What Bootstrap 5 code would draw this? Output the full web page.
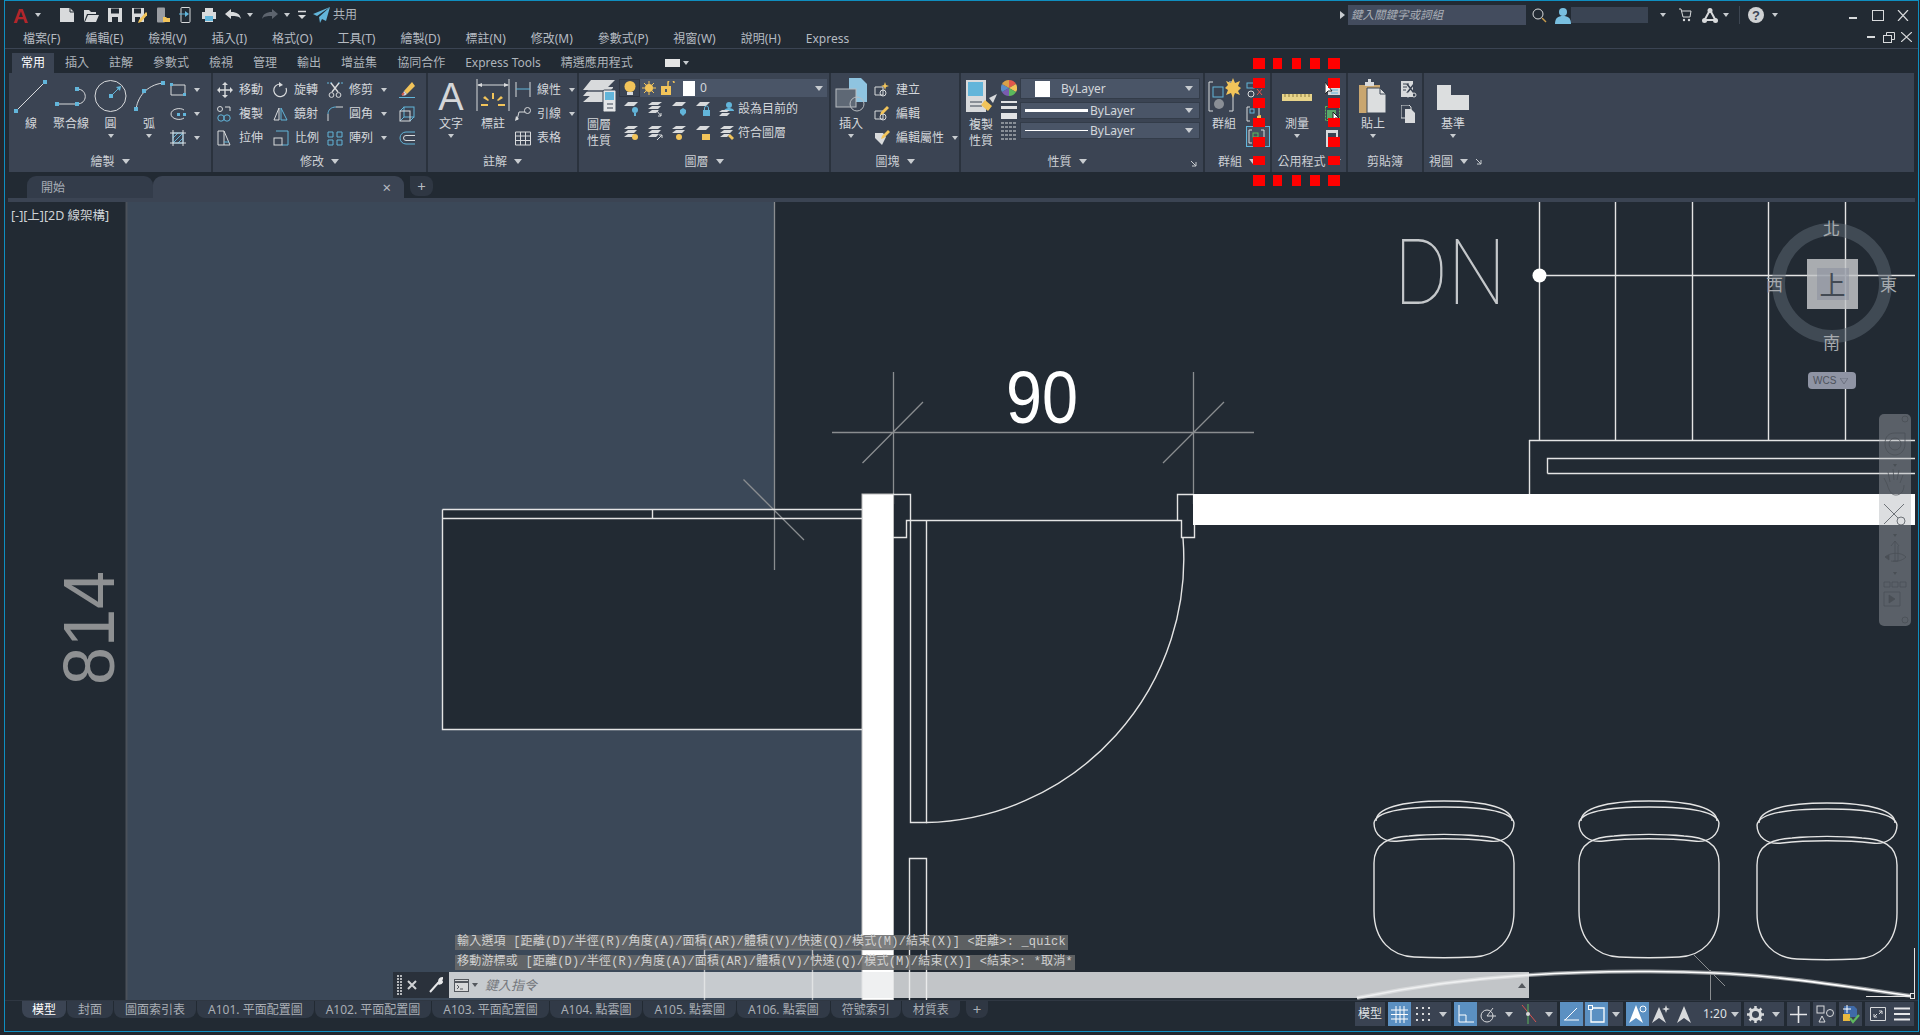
<!DOCTYPE html>
<html lang="zh-Hant">
<head>
<meta charset="UTF-8">
<title>AutoCAD</title>
<link rel="stylesheet" href="https://cdn.jsdelivr.net/npm/bootstrap@5.3.0/dist/css/bootstrap.min.css">
<style>
html, body { height: 100%; overflow: hidden; background: #23272d; }
body { font: 12px/1 "Noto Sans", "Noto Sans CJK TC", sans-serif; color: #c4c8ce; }
.app-frame { width: 1915px; height: 1032px; margin-left: 4px; border: 1px solid #0f8ec0; background: #222a33; display: flex; flex-direction: column; overflow: hidden; }
.dn { display: inline-block; width: 0; height: 0; border-left: 3px solid transparent; border-right: 3px solid transparent; border-top: 4px solid #c8ccd0; flex: none; }
.dn-lg { border-left-width: 4px; border-right-width: 4px; border-top-width: 5px; }
svg { display: block; flex: none; }
.ic { fill: none; stroke: #d8dadc; stroke-width: 1; }
.ic .bl { stroke: #62b5da; }
.ic .fw { fill: #d8dadc; stroke: none; }
.ic .fb { fill: #62b5da; stroke: none; }
.ic .fy { fill: #f2c45a; stroke: none; }
.ml2 { margin-left: 2px; } .ml3 { margin-left: 3px; } .ml5 { margin-left: 5px; } .ml6 { margin-left: 6px; } .ml7 { margin-left: 7px; } .ml8 { margin-left: 8px; }
.ml10 { margin-left: 10px; } .ml12 { margin-left: 12px; } .ml13 { margin-left: 13px; } .ml18 { margin-left: 18px; }

/* title + menu */
.title-bar { height: 28px; padding: 0 9px 0 8px; flex: none; }
.logo-a { font: bold 21px/1 "Liberation Sans", sans-serif; color: #b3262b; width: 16px; }
#share-lb { font-size: 12px; color: #aeb4bb; }
.search-box { width: 178px; height: 20px; background: #434c5e; padding-left: 3px; color: #a9aeb6; font-style: italic; line-height: 20px; font-size: 11.5px; }
.user-box { width: 77px; height: 16px; background: #3a4453; }
.bar-sep { width: 1px; height: 18px; background: #3d4652; }
#win-min { margin: 6px 0 0 71px; } #win-max { margin-left: 15px; } #win-close { margin-left: 13px; }
.menu-bar { height: 20px; padding: 0 6px 0 18px; gap: 25px; border-bottom: 1px solid #3b4453; flex: none; color: #b6bbc2; }
.doc-ctrl { margin-bottom: 3px; }
.doc-ctrl svg:nth-child(3) { margin-left: -2px; }

/* ribbon */
.tab-row { height: 24px; padding: 4px 0 0 7px; flex: none; }
.rb-tab { height: 20px; padding: 0 10px; display: flex; align-items: center; color: #aeb4bb; }
.rb-tab.is-on { background: #3b4453; color: #fff; padding: 0 9px; margin-right: 1px; }
.tab-widget { width: 15px; height: 8px; background: #e4e4e4; margin-left: 22px; margin-right: 3px; }
.ribbon { height: 99px; margin: 0 4px; background: #3b4453; display: flex; flex: none; color: #d4d7db; }
.rb-panel { display: flex; flex-direction: column; border-right: 2px solid #2a323d; flex: none; }
.rb-body { height: 78px; padding-top: 5px; display: flex; }
.rb-foot { flex: 1; display: flex; align-items: center; justify-content: center; gap: 7px; color: #cdd0d5; }
#p-draw { width: 204px; } #p-draw .rb-body { padding-left: 4px; }
#p-mod { width: 215px; } #p-mod .rb-body { padding-left: 4px; }
#p-ann { width: 151px; }
#p-lay { width: 252px; }
#p-blk { width: 130px; }
#p-prop { width: 244px; }
#p-grp { width: 67px; }
#p-util { width: 76px; }
#p-clip { width: 76px; }
#p-view { flex: 1; border-right: 0; }
#p-view .rb-foot { justify-content: flex-start; padding-left: 5px; }
#p-prop .rb-foot { padding-right: 30px; position: relative; }
.big { display: flex; flex-direction: column; align-items: center; text-align: center; flex: none; }
.big > svg { margin-bottom: 4px; overflow: visible; }
.big .t2 { line-height: 16px; margin-top: -1px; }
.big .dn { margin-top: 4px; }
.w36 { width: 36px; } .w38 { width: 38px; } .w40 { width: 40px; } .w42 { width: 42px; } .w44 { width: 44px; } .w46 { width: 46px; } .w35 { width: 35px; } .w50 { width: 50px; } .w58 { width: 58px; }
.rb-col { display: flex; flex-direction: column; flex: none; }
.rb-row { height: 24px; display: flex; align-items: center; }
.rb-row .lb { margin-left: 6px; white-space: nowrap; }
.rb-row .dn { margin-left: 8px; }
.c1 { width: 56px; } .c2 { width: 54px; } .c3 { width: 72px; }
.layer-drop { width: 208px; height: 18px; background: #4a5567; margin-top: 1px; display: flex; align-items: center; color: #d4d7db; }
.bulb-box { width: 21px; height: 18px; background: #3b4453; border: 1px solid #2f3642; display: flex; align-items: center; justify-content: center; margin-right: 2px; }
.layer-sq { width: 12px; height: 15px; background: #fff; margin: 0 5px 0 7px; }
.layer-row { height: 24px; padding-left: 4px; gap: 8px; }
.layer-row .lb-layer { margin-left: -5px; white-space: nowrap; }
.prop-drop { width: 180px; height: 17px; margin-bottom: 3px; background: #4a5567; border: 1px solid #333c49; display: flex; align-items: center; padding: 0 6px 0 4px; color: #d4d7db; }
.prop-drop:first-child { height: 21px; }
.prop-swatch { width: 15px; height: 16px; background: #fff; margin: 0 11px 0 10px; flex: none; }
.prop-line { width: 63px; height: 3px; background: #fff; margin-right: 2px; flex: none; }
.prop-line.thin { height: 1px; }
.prop-ic { gap: 3px; }
.tool-selected { width: 24px; height: 21px; border: 1px solid #62b5da; background: #46505f; }
.arrow-corner { position: absolute; right: 6px; bottom: 5px; }

/* document tabs */
.doc-row { height: 26px; padding: 4px 0 0 22px; flex: none; display: flex; }
.doc-tab { height: 22px; background: #333c4a; border-radius: 9px 9px 0 0; padding: 2px 0 0 14px; display: flex; align-items: center; width: 126px; color: #a7adb5; }
.doc-tab.is-on { background: #3b4453; width: 251px; justify-content: flex-end; padding: 0 13px 0 0; color: #b7bbc1; font-size: 15px; }
.doc-plus { width: 23px; height: 20px; margin-left: 6px; padding-top: 1px; background: #2f3743; border-radius: 0 8px 8px 8px; color: #b7bbc1; display: flex; align-items: center; justify-content: center; font-size: 15px; }
.doc-strip { height: 4px; background: #3b4453; margin-left: 3px; margin-right: 3px; flex: none; }

/* viewport */
.viewport { position: relative; width: 1910px; height: 798px; flex: none; }
.cad-sheet { position: absolute; left: 0; top: 0; }
.vp-label { position: absolute; left: 6px; top: 8px; color: #cfd2d6; font-size: 12.5px; }
.compass { position: absolute; left: 1754px; top: 0; width: 156px; height: 192px; color: #a6aaae; }
.compass .ring { position: absolute; left: 13px; top: 21px; width: 120px; height: 120px; border: 13px solid rgba(90,100,112,.55); border-radius: 50%; }
.cube-face { position: absolute; left: 48px; top: 57px; width: 51px; height: 50px; background: rgba(196,198,200,.84); display: flex; align-items: center; justify-content: center; }
.cube-face span { width: 32px; height: 32px; background: rgba(130,138,155,.45); color: #434a54; font-size: 26px; line-height: 32px; text-align: center; font-family: "Noto Sans CJK TC", serif; }
.dir { position: absolute; font: 17px/18px "Noto Sans CJK TC", sans-serif; }
.dir-n { left: 64px; top: 17px; } .dir-s { left: 64px; top: 131px; } .dir-w { left: 7px; top: 73px; } .dir-e { left: 121px; top: 73px; }
.wcs-tag { position: absolute; left: 49px; top: 170px; width: 48px; height: 17px; background: #8f94a4; border-radius: 4px; color: #4d525c; font: 10px/16px "Liberation Sans", sans-serif; padding-left: 5px; display: flex; align-items: center; gap: 4px; }
.nav-strip { position: absolute; left: 1874px; top: 212px; width: 32px; height: 212px; background: rgba(170,175,180,.41); border-radius: 5px; }
.cmd-wrap { position: absolute; left: 388px; top: 733px; }
.cmd-hist { display: table; height: 15px; margin: 0 0 5px 62px; padding: 0 2px; background: rgba(104,105,106,.86); color: #d0d0d0; font: 12px/15px "Liberation Mono", "Noto Sans CJK TC", monospace; letter-spacing: .2px; white-space: pre; }
.cmd-bar { height: 26px; display: flex; margin-top: -3px; width: 1136px; }
.cmd-hand { width: 56px; background: #2a313b; display: flex; align-items: center; padding-left: 4px; gap: 5px; }
.cmd-input { flex: 1; background: rgba(235,236,238,.8); display: flex; align-items: center; padding-left: 5px; gap: 3px; color: #74777c; font-size: 13px; font-style: italic; }
.cmd-input .dn { border-top-color: #54585e; }
.cmd-input .dn-up { margin-left: auto; margin-right: 3px; border-left: 4px solid transparent; border-right: 4px solid transparent; border-bottom: 5px solid #54585e; width: 0; height: 0; }

/* bottom */
.foot-row { height: 31px; flex: none; display: flex; align-items: flex-start; padding-right: 4px; border-top: 1px solid #2f3742; }
.lt-tabs { display: flex; gap: 1px; padding-left: 17px; }
.lt-tab { height: 17px; padding: 0 11px; background: #313a47; border-radius: 0 0 8px 8px; color: #a9aeb5; font-size: 12px; display: flex; align-items: center; white-space: nowrap; }
.lt-tab.is-on { color: #fff; background: #3b4453; padding: 0 10px; }
.lt-plus { background: #2f3743; font-size: 15px; padding: 0 7px; margin-left: 5px; }
.st-bar { margin-left: auto; display: flex; gap: 3px; padding-top: 1px; }
.st-grp { height: 24px; background: #3a4352; display: flex; align-items: center; flex: none; }
.st-txt { color: #dfe1e4; font-size: 13px; padding: 0 4px; }
.st-btn { width: 23px; height: 24px; display: flex; align-items: center; justify-content: center; flex: none; }
.st-btn.on { background: #5b90c2; }
.st-btn.on + .st-btn.on { margin-left: 2px; }
.st-car { width: 17px; display: flex; justify-content: center; flex: none; }
.st-btn.on + .st-btn.on + .st-car { width: 15px; }
#st-model { width: 30px; justify-content: center; } #st-model .st-txt { padding: 0; font-size: 12px; }
#st-scale { width: 115px; }
#st-scale .st-txt { padding: 0; margin-left: 8px; font-size: 12px; }
#st-menu { width: 49px; justify-content: center; }
.red-dash { position: absolute; left: 0; top: 0; pointer-events: none; }
</style>
</head>
<body class="m-0">
<div class="app-frame position-relative">

  <header class="title-bar d-flex align-items-center">
    <span class="logo-a">A</span><span class="dn ml6"></span>
    <svg class="ic ml18" width="16" height="16" viewBox="0 0 16 16"><path class="fw" d="M1 1h10l4 4v10H1z"/><path d="M11 1v4h4" stroke="#222a33"/></svg>
    <svg class="ic ml8" width="16" height="16" viewBox="0 0 16 16"><path class="fw" d="M1 3h5l2 2h5v2H4l-3 8zM5 8h11l-3 7H2z"/></svg>
    <svg class="ic ml8" width="16" height="16" viewBox="0 0 16 16"><path class="fw" d="M1 1h14v14H1z"/><path d="M4 1.5h8v5H4zM5 10h6v5H5z" fill="#222a33" stroke="none"/></svg>
    <svg class="ic ml8" width="16" height="16" viewBox="0 0 16 16"><path class="fw" d="M1 1h12v14H1z"/><path d="M3 1.5h7v5H3zM4 10h5v5H4z" fill="#222a33" stroke="none"/><path class="fy" d="M15 5l2 2-7 8-3 1 1-3z"/></svg>
    <svg class="ic ml8" width="16" height="16" viewBox="0 0 16 16"><rect x="2" y="0.5" width="8" height="15" rx="1" fill="#9a9da2" stroke="none"/><path class="fy" d="M8 10h3l1 1h3v4H8z"/></svg>
    <svg class="ic ml8" width="14" height="16" viewBox="0 0 14 16"><rect x="2" y="0.5" width="9" height="15" rx="1"/><path class="bl" d="M0 7h7"/><path class="fb" d="M6 4l4 3-4 3z"/></svg>
    <svg class="ic ml8" width="16" height="16" viewBox="0 0 16 16"><path class="fw" d="M4 1h8v4h3v7h-3v3H4v-3H1V5h3z"/><path class="fb" d="M4 9h8v5H4z"/></svg>
    <svg class="ic ml8" width="17" height="16" viewBox="0 0 17 16"><path class="fw" d="M0 7l6-5v3c6 0 9 2 10 7-2-3-5-3-10-3v3z"/></svg>
    <span class="dn ml5"></span>
    <svg class="ic ml8" width="17" height="16" viewBox="0 0 17 16"><path d="M17 7l-6-5v3C5 5 2 7 1 12c2-3 5-3 10-3v3z" fill="#5d646e" stroke="none"/></svg>
    <span class="dn ml6"></span>
    <svg class="ic ml8" width="8" height="10" viewBox="0 0 8 10"><path d="M0 1.5h8" stroke-width="1.5"/><path class="fw" d="M0 5h8L4 9z"/></svg>
    <svg class="ic ml7" width="17" height="16" viewBox="0 0 17 16"><path class="fb" d="M17 0L0 7l4 2zM17 0L6 10l1 6 2-4 4 2z"/></svg>
    <span class="ml3" id="share-lb">共用</span>

    <span class="ms-auto d-flex align-items-center">
      <svg width="5" height="8" viewBox="0 0 5 8"><path d="M0 0l5 4-5 4z" fill="#c8ccd0"/></svg>
      <span class="search-box ml3">鍵入關鍵字或詞組</span>
      <svg class="ic ml6" width="15" height="15" viewBox="0 0 15 15"><circle cx="6" cy="6" r="5"/><path d="M10 10l4 4" stroke="#c89b4c" stroke-width="1.5"/></svg>
      <svg class="ml8" width="16" height="17" viewBox="0 0 16 17"><circle cx="8" cy="5" r="4" fill="#79bfe0"/><path d="M0 17c0-6 3-8 8-8s8 2 8 8z" fill="#79bfe0"/></svg>
      <span class="user-box"></span>
      <span class="dn ml12"></span>
      <svg class="ic ml13" width="13" height="14" viewBox="0 0 13 14"><path d="M0 1h2l2 8h7l1-6H3"/><circle class="fw" cx="5" cy="12" r="1.2"/><circle class="fw" cx="10" cy="12" r="1.2"/></svg>
      <svg class="ic ml10" width="16" height="15" viewBox="0 0 16 15"><path d="M8 2L2 13M8 2l6 11M4 12h8" stroke-width="2"/><circle class="fw" cx="8" cy="2.5" r="2.5"/><circle class="fw" cx="2.5" cy="12.5" r="2.5"/><circle class="fw" cx="13.5" cy="12.5" r="2.5"/></svg>
      <span class="dn ml5"></span>
      <span class="bar-sep ml10"></span>
      <svg class="ml8" width="16" height="16" viewBox="0 0 16 16"><circle cx="8" cy="8" r="8" fill="#d0d2d4"/><text x="8" y="12.5" text-anchor="middle" font-family="Liberation Sans" font-weight="700" font-size="13" fill="#3b4453">?</text></svg>
      <span class="dn ml8"></span>
      <svg class="ic" id="win-min" width="8" height="2" viewBox="0 0 8 2"><path d="M0 1h8" stroke-width="2"/></svg>
      <svg class="ic" id="win-max" width="12" height="11" viewBox="0 0 12 11"><rect x="0.5" y="0.5" width="11" height="10"/></svg>
      <svg class="ic" id="win-close" width="12" height="11" viewBox="0 0 12 11"><path d="M1 0l10 11M11 0L1 11" stroke-width="1.2"/></svg>
    </span>
  </header>

  <nav class="menu-bar d-flex align-items-center position-relative">
    <span>檔案(F)</span><span>編輯(E)</span><span>檢視(V)</span><span>插入(I)</span><span>格式(O)</span><span>工具(T)</span><span>繪製(D)</span><span>標註(N)</span><span>修改(M)</span><span>參數式(P)</span><span>視窗(W)</span><span>說明(H)</span><span>Express</span>
    <span class="ms-auto d-flex align-items-center gap-2 doc-ctrl">
      <svg class="ic" width="8" height="2" viewBox="0 0 8 2"><path d="M0 1h8" stroke-width="2"/></svg>
      <svg class="ic" width="12" height="11" viewBox="0 0 12 11"><rect x="0.5" y="3.5" width="8" height="7"/><path d="M3.5 3V.5h8v7H9"/></svg>
      <svg class="ic" width="11" height="10" viewBox="0 0 11 10"><path d="M0 0l11 10M11 0L0 10" stroke-width="1.2"/></svg>
    </span>
  </nav>

  <div class="tab-row d-flex">
    <span class="rb-tab is-on">常用</span><span class="rb-tab">插入</span><span class="rb-tab">註解</span><span class="rb-tab">參數式</span><span class="rb-tab">檢視</span><span class="rb-tab">管理</span><span class="rb-tab">輸出</span><span class="rb-tab">增益集</span><span class="rb-tab">協同合作</span><span class="rb-tab">Express Tools</span><span class="rb-tab">精選應用程式</span>
    <span class="align-self-center d-flex align-items-center"><span class="tab-widget"></span><span class="dn"></span></span>
  </div>

  <section class="ribbon">
    <!-- 繪製 -->
    <div class="rb-panel" id="p-draw">
      <div class="rb-body">
        <div class="big w36"><svg class="ic" width="36" height="36" viewBox="0 0 36 36"><path d="M3 33L32 4"/><rect class="fb" x="1" y="31" width="4" height="4"/><rect class="fb" x="30" y="2" width="4" height="4"/></svg><span>線</span></div>
        <div class="big w44"><svg class="ic" width="44" height="36" viewBox="0 0 44 36"><path d="M8 26h20M28 11c11 0 11 15 0 15"/><rect class="fb" x="6" y="24" width="4" height="4"/><rect class="fb" x="26" y="24" width="4" height="4"/><rect class="fb" x="26" y="9" width="4" height="4"/></svg><span>聚合線</span></div>
        <div class="big w35"><svg class="ic" width="35" height="36" viewBox="0 0 35 36"><circle cx="17.5" cy="18" r="15.5"/><path class="bl" d="M18 18l8-8"/><rect class="fb" x="16" y="16" width="4" height="4"/><path class="fb" d="M28 8l-5 1 4 4z"/></svg><span>圓</span><span class="dn"></span></div>
        <div class="big w42"><svg class="ic" width="42" height="36" viewBox="0 0 42 36"><path d="M8 32C9 20 18 7 35 5"/><rect class="fb" x="6" y="29" width="4" height="4"/><rect class="fb" x="14" y="11" width="4" height="4"/><rect class="fb" x="33" y="3" width="4" height="4"/></svg><span>弧</span><span class="dn"></span></div>
        <div class="rb-col">
          <div class="rb-row"><svg class="ic" width="16" height="14" viewBox="0 0 16 14"><path d="M1 2h14v10H1z"/><rect class="fb" x="0" y="0" width="3" height="3"/><rect class="fb" x="13" y="10" width="3" height="3"/></svg><span class="dn"></span></div>
          <div class="rb-row"><svg class="ic" width="16" height="14" viewBox="0 0 16 14"><path d="M14 3C10 0 1 2 1 7s9 7 13 4"/><rect class="fb" x="7" y="6" width="3" height="3"/><rect class="fb" x="13" y="6" width="3" height="3"/></svg><span class="dn"></span></div>
          <div class="rb-row"><svg class="ic" width="16" height="16" viewBox="0 0 16 16"><rect class="bl" x="3" y="3" width="10" height="10"/><path class="bl" d="M3 8l5-5M3 13l10-10M8 13l5-5"/><path d="M0 3h16M0 13h16M3 0v16M13 0v16"/></svg><span class="dn"></span></div>
        </div>
      </div>
      <div class="rb-foot">繪製<span class="dn dn-lg"></span></div>
    </div>
    <!-- 修改 -->
    <div class="rb-panel" id="p-mod">
      <div class="rb-body">
        <div class="rb-col c1">
          <div class="rb-row"><svg class="ic" width="16" height="16" viewBox="0 0 16 16"><path d="M8 2v12M2 8h12" stroke-width="1.4"/><path class="fw" d="M8 0l3 3H5zM8 16l3-3H5zM0 8l3-3v6zM16 8l-3-3v6z"/></svg><span class="lb">移動</span></div>
          <div class="rb-row"><svg class="ic" width="16" height="16" viewBox="0 0 16 16"><circle cx="4" cy="12" r="3.2" class="bl"/><circle cx="10" cy="12" r="3.2" class="bl"/><circle cx="3" cy="3" r="2.5"/><path d="M8 1h5v4"/></svg><span class="lb">複製</span></div>
          <div class="rb-row"><svg class="ic" width="16" height="16" viewBox="0 0 16 16"><path d="M1 1h6v14H1zM7 1l6 14H7"/><path class="bl" d="M7 12h5"/></svg><span class="lb">拉伸</span></div>
        </div>
        <div class="rb-col c2">
          <div class="rb-row"><svg class="ic" width="15" height="16" viewBox="0 0 15 16"><path d="M7 2a6.3 6.3 0 1 0 6 4" stroke-width="1.2"/><path class="fw" d="M6 0l4 3-4 2z"/></svg><span class="lb">旋轉</span></div>
          <div class="rb-row"><svg class="ic" width="15" height="16" viewBox="0 0 15 16"><path d="M6 2L1 14h5z"/><path class="bl" d="M8 2l6 12H8z"/></svg><span class="lb">鏡射</span></div>
          <div class="rb-row"><svg class="ic" width="16" height="16" viewBox="0 0 16 16"><path class="bl" d="M3 1h12v14H9"/><rect x="1" y="8" width="8" height="7" stroke="#d8dadc"/></svg><span class="lb">比例</span></div>
        </div>
        <div class="rb-col c3">
          <div class="rb-row"><svg class="ic" width="16" height="16" viewBox="0 0 16 16"><path class="bl" d="M0 1h5M11 1h5" stroke-dasharray="2 1"/><path d="M4 1l7 9M12 1L5 10" stroke-width="1.4"/><circle cx="4.5" cy="13" r="2.4"/><circle cx="11.5" cy="13" r="2.4"/></svg><span class="lb">修剪</span><span class="dn"></span></div>
          <div class="rb-row"><svg class="ic" width="16" height="16" viewBox="0 0 16 16"><path d="M9 1h7M1 8v7"/><path class="bl" d="M1 8c0-4 3-7 8-7"/></svg><span class="lb">圓角</span><span class="dn"></span></div>
          <div class="rb-row"><svg class="ic" width="16" height="16" viewBox="0 0 16 16"><path class="bl" d="M1 2h5v5H1zM10 2h5v5h-5zM1 10h5v5H1zM10 10h5v5h-5z"/></svg><span class="lb">陣列</span><span class="dn"></span></div>
        </div>
        <div class="rb-col">
          <div class="rb-row"><svg class="ic" width="16" height="16" viewBox="0 0 16 16"><path class="fy" d="M13 0l3 4-8 8-3-3z"/><path class="fw" d="M5 9l3 3-2 1.5H3z"/><path d="M3 13l2-2" stroke="#d85a4a" stroke-width="2"/><path class="bl" d="M0 15.5h16"/></svg></div>
          <div class="rb-row"><svg class="ic" width="16" height="16" viewBox="0 0 16 16"><rect class="bl" x="5" y="1" width="10" height="10"/><path class="bl" d="M1 5l4-4M11 15l4-4M1 15l4-4"/><rect x="1" y="5" width="10" height="10"/></svg></div>
          <div class="rb-row"><svg class="ic" width="16" height="14" viewBox="0 0 16 14"><path class="bl" d="M16 1H7a6 6 0 0 0 0 12h9"/><path d="M16 4.5H7a2.5 2.5 0 0 0 0 5h9"/></svg></div>
        </div>
      </div>
      <div class="rb-foot">修改<span class="dn dn-lg"></span></div>
    </div>
    <!-- 註解 -->
    <div class="rb-panel" id="p-ann">
      <div class="rb-body">
        <div class="big w46"><svg width="46" height="36" viewBox="0 0 46 36"><text x="23" y="32" text-anchor="middle" font-family="Liberation Sans" font-size="38" fill="#d4d6d8">A</text></svg><span>文字</span><span class="dn"></span></div>
        <div class="big w38"><svg class="ic" width="38" height="36" viewBox="0 0 38 36"><path d="M3 1v32M35 1v32M4 7h30"/><path class="fw" d="M3 7l5-2v4zM35 7l-5-2v4z"/><path class="fy" d="M18 15h2v6h-2zM9 20l2-2 4 4-1 1zM29 20l-2-2-4 4 1 1zM7 26h7v2H7zM24 26h7v2h-7z"/></svg><span>標註</span></div>
        <div class="rb-col ml3">
          <div class="rb-row"><svg class="ic" width="16" height="16" viewBox="0 0 16 16"><path d="M1 0v15M15 0v15"/><path class="bl" d="M1 7h14"/></svg><span class="lb">線性</span><span class="dn"></span></div>
          <div class="rb-row"><svg class="ic" width="16" height="16" viewBox="0 0 16 16"><circle cx="12.5" cy="4.5" r="3"/><path d="M10 6L4 6 2 14"/><path class="fw" d="M0 15l1-5 3 3z"/></svg><span class="lb">引線</span><span class="dn"></span></div>
          <div class="rb-row"><svg class="ic" width="16" height="16" viewBox="0 0 16 16"><path d="M.5 2h15v13H.5zM.5 6h15M.5 10.500h15M5.500 2v13M10.500 2v13"/></svg><span class="lb">表格</span></div>
        </div>
      </div>
      <div class="rb-foot">註解<span class="dn dn-lg"></span></div>
    </div>
    <!-- 圖層 -->
    <div class="rb-panel" id="p-lay">
      <div class="rb-body">
        <div class="big w40"><svg class="ic" width="36" height="36" viewBox="0 0 36 36"><path class="fw" d="M10 2h24l-10 10H2zM10 9h22v1l-8 8H2zM10 17h14v7H2z"/><path d="M2 13h22" stroke="#3b4453" stroke-width="1.4"/><rect x="22" y="12" width="13" height="22" rx="1.500" fill="#e4e6e8" stroke="#3b4453"/><rect class="fb" x="24" y="14" width="9" height="8"/><path d="M26 26h6M26 30h6" stroke="#3b4453"/></svg><span class="t2">圖層<br>性質</span></div>
        <div class="rb-col">
          <div class="layer-drop">
            <span class="bulb-box"><svg width="12" height="15" viewBox="0 0 12 15"><circle cx="6" cy="5.500" r="5.500" fill="#f2c45a"/><rect x="3" y="11" width="6" height="3" fill="#d8dadc"/></svg></span>
            <svg width="14" height="14" viewBox="0 0 14 14"><circle cx="7" cy="7" r="4" fill="#f2c45a"/><path d="M7 0v14M0 7h14M2 2l10 10M12 2L2 12" stroke="#f2c45a"/></svg>
            <svg class="ml5" width="15" height="14" viewBox="0 0 15 14"><path d="M0 5h10v9H0z" fill="#f2c45a"/><path d="M7 5V2a3 3 0 0 1 6 0" fill="none" stroke="#f2c45a" stroke-width="1.500"/><rect x="4" y="8" width="2" height="3" fill="#4a5567"/></svg>
            <span class="layer-sq"></span>
            <span>0</span>
            <span class="dn dn-lg ms-auto me-1"></span>
          </div>
          <div class="d-flex align-items-center layer-row">
            <svg class="ic" width="16" height="15" viewBox="0 0 16 15"><path d="M5 0h10l-4 4H1z" fill="#d8dadc" stroke="none"/><circle class="fb" cx="12" cy="8" r="3"/><path d="M11 11h2v3h-2z" fill="#62b5da" stroke="none"/></svg>
            <svg class="ic" width="16" height="15" viewBox="0 0 16 15"><path class="fw" d="M5 0h10l-4 3H1zM5 4h9l-3 3H1zM5 8h7l-3 3H1z"/><path d="M10 9l4 5M14 11v3h-3"/></svg>
            <svg class="ic" width="16" height="15" viewBox="0 0 16 15"><path d="M5 0h10l-4 4H1z" fill="#d8dadc" stroke="none"/><path class="fb" d="M12 6l3 2v3l-3 3-3-3V8z"/></svg>
            <svg class="ic" width="16" height="15" viewBox="0 0 16 15"><path d="M5 0h10l-4 4H1z" fill="#d8dadc" stroke="none"/><rect class="fb" x="8" y="8" width="7" height="6"/><path class="bl" d="M9.500 8V6a2 2 0 0 1 4 0v2"/></svg>
            <svg class="ic" width="16" height="15" viewBox="0 0 16 15"><circle class="fb" cx="10" cy="3" r="3"/><path class="fb" d="M5 9c0-2 3-3 5-3s5 1 5 3z"/><path class="fw" d="M3 8h8l-3 2H0zM3 11h8l-3 3H0z"/></svg>
            <span class="lb-layer">設為目前的</span>
          </div>
          <div class="d-flex align-items-center layer-row">
            <svg class="ic" width="16" height="15" viewBox="0 0 16 15"><path class="fw" d="M5 0h10l-4 3H1zM5 4h9l-3 3H1zM5 8h7l-3 3H1z"/><circle class="fy" cx="12" cy="11" r="3"/></svg>
            <svg class="ic" width="16" height="15" viewBox="0 0 16 15"><path class="fw" d="M5 0h10l-4 3H1zM5 4h9l-3 3H1zM5 8h7l-3 3H1z"/><path d="M10 14l5-5M12 9h3v3"/></svg>
            <svg class="ic" width="16" height="15" viewBox="0 0 16 15"><path class="fw" d="M5 0h10l-4 3H1zM5 4h9l-3 3H1z"/><circle class="fy" cx="8" cy="11" r="3"/></svg>
            <svg class="ic" width="16" height="15" viewBox="0 0 16 15"><path class="fw" d="M5 0h10l-4 4H1z"/><rect class="fy" x="7" y="8" width="8" height="6"/></svg>
            <svg class="ic" width="16" height="15" viewBox="0 0 16 15"><path class="fw" d="M5 0h10l-4 3H1zM5 4h9l-3 3H1zM5 8h6l-3 3H1z"/><path class="fy" d="M11 8l4 4-2 2-4-4z"/></svg>
            <span class="lb-layer">符合圖層</span>
          </div>
        </div>
      </div>
      <div class="rb-foot">圖層<span class="dn dn-lg"></span></div>
    </div>
    <!-- 圖塊 -->
    <div class="rb-panel" id="p-blk">
      <div class="rb-body">
        <div class="big w40"><svg class="ic" width="33" height="36" viewBox="0 0 33 36"><path d="M14 0h12l6 6v18H14z" fill="#8fc4e0" stroke="none"/><rect x="1" y="11" width="20" height="18" fill="#5e6875" stroke="#b8bcc1"/><circle cx="22" cy="26" r="7" stroke="#b8bcc1"/></svg><span>插入</span><span class="dn"></span></div>
        <div class="rb-col ml3">
          <div class="rb-row"><svg class="ic" width="16" height="16" viewBox="0 0 16 16"><path d="M1 5h8v8H1z"/><circle cx="9" cy="11" r="3"/><path class="fy" d="M11 0l1 3 3 1-3 1-1 3-1-3-3-1 3-1z"/></svg><span class="lb">建立</span></div>
          <div class="rb-row"><svg class="ic" width="16" height="16" viewBox="0 0 16 16"><path d="M1 5h8v8H1z"/><circle cx="9" cy="11" r="3"/><path class="fy" d="M13 0l2 2-6 6-3 1 1-3z"/></svg><span class="lb">編輯</span></div>
          <div class="rb-row"><svg class="ic" width="16" height="16" viewBox="0 0 16 16"><path class="fw" d="M1 3h8l3 4-4 8-7-7z"/><path class="fy" d="M14 0l2 2-6 6-3 1 1-3z"/></svg><span class="lb">編輯屬性</span><span class="dn"></span></div>
        </div>
      </div>
      <div class="rb-foot">圖塊<span class="dn dn-lg"></span></div>
    </div>
    <!-- 性質 -->
    <div class="rb-panel" id="p-prop">
      <div class="rb-body">
        <div class="big w40"><svg class="ic" width="32" height="36" viewBox="0 0 32 36"><rect class="fw" x="1" y="2" width="20" height="32"/><rect class="fb" x="3" y="4" width="15" height="14"/><path d="M5 24h12M5 28h12" stroke="#3b4453"/><path class="fy" d="M20 22l7 6-4 5-7-6z"/><path class="fw" d="M24 20l8-4-4 9z"/></svg><span class="t2">複製<br>性質</span></div>
        <div class="rb-col prop-ic">
          <svg width="16" height="20" viewBox="0 0 16 20"><path d="M8 10V2a8 8 0 0 1 7 4z" fill="#e2574c"/><path d="M8 10l7-4a8 8 0 0 1 0 8z" fill="#f2c45a"/><path d="M8 10l7 4a8 8 0 0 1-7 4z" fill="#5cb85c"/><path d="M8 10v8a8 8 0 0 1-7-4z" fill="#7a5cb0"/><path d="M8 10l-7 4a8 8 0 0 1 0-8z" fill="#5c8cc8"/><path d="M8 10L1 6a8 8 0 0 1 7-4z" fill="#d9a04a"/></svg>
          <svg width="16" height="18" viewBox="0 0 16 18"><path d="M0 0h16v2H0zM0 5h16v3H0zM0 12h16v6H0z" fill="#e2e3e5"/></svg>
          <svg width="16" height="18" viewBox="0 0 16 18"><path d="M0 1h16M0 5h16M0 9h16M0 13h16M0 17h16" stroke="#d8dadc" stroke-dasharray="3 1"/></svg>
        </div>
        <div class="rb-col ml3 prop-drops">
          <div class="prop-drop"><span class="prop-swatch"></span>ByLayer<span class="dn dn-lg ms-auto"></span></div>
          <div class="prop-drop"><span class="prop-line"></span>ByLayer<span class="dn dn-lg ms-auto"></span></div>
          <div class="prop-drop"><span class="prop-line thin"></span>ByLayer<span class="dn dn-lg ms-auto"></span></div>
        </div>
      </div>
      <div class="rb-foot">性質<span class="dn dn-lg"></span><svg class="arrow-corner" width="7" height="7" viewBox="0 0 7 7"><path d="M1 1l5 5M6 2v4H2" fill="none" stroke="#c8ccd0"/></svg></div>
    </div>
    <!-- 群組 -->
    <div class="rb-panel" id="p-grp">
      <div class="rb-body">
        <div class="big w38"><svg class="ic" width="33" height="36" viewBox="0 0 33 36"><path d="M5 4H1v29h4M21 4h4v29h-4" /><rect class="bl" x="5" y="9" width="10" height="10"/><circle cx="11" cy="26" r="5" fill="#8a8f96" stroke="none"/><path class="fy" d="M25 0l2 5 5-2-2 5 3 2-3 3 2 4-5-2-2 5-2-5-5 2 2-5-3-2 3-3-2-4 5 2z"/></svg><span>群組</span></div>
        <div class="rb-col ml3 grp-col">
          <div class="rb-row"><svg class="ic" width="18" height="16" viewBox="0 0 18 16"><rect class="bl" x="1" y="1" width="7" height="5"/><circle cx="5" cy="12" r="3"/><path d="M11 7l5 6M16 7l-5 6" stroke="#e2574c"/></svg></div>
          <div class="rb-row"><svg class="ic" width="18" height="16" viewBox="0 0 18 16"><path d="M4 1H1v14h3M10 1h3v14h-3"/><rect class="bl" x="4" y="3" width="4" height="4"/><path class="fy" d="M11 10l4-1v5h-4z"/></svg></div>
          <div class="tool-selected"><svg class="ic" width="22" height="19" viewBox="0 0 22 19"><path d="M5 3H2v13h3M14 3h3v13h-3"/><rect x="6" y="6" width="5" height="4" stroke="#5cb85c"/></svg></div>
        </div>
      </div>
      <div class="rb-foot">群組<span class="dn dn-lg"></span></div>
    </div>
    <!-- 公用程式 -->
    <div class="rb-panel" id="p-util">
      <div class="rb-body">
        <div class="big w50"><svg width="30" height="36" viewBox="0 0 30 36"><rect x="0" y="16" width="30" height="7" fill="#e8d48a"/><path d="M3 16v3M7 16v3M11 16v3M15 16v3M19 16v3M23 16v3M27 16v3" stroke="#8b7a3c"/></svg><span>測量</span><span class="dn"></span></div>
        <div class="rb-col ml3 util-col">
          <div class="rb-row"><svg class="ic" width="16" height="16" viewBox="0 0 16 16"><rect class="fw" x="3" y="3" width="12" height="10"/><path class="bl" d="M6 5h7M6 8h7M6 11h7"/><path d="M0 0v12l3-3h4z" fill="#fff" stroke="#222"/></svg></div>
          <div class="rb-row"><svg class="ic" width="16" height="16" viewBox="0 0 16 16"><rect x="0.500" y="0.500" width="14" height="14" stroke="#5cb85c" stroke-dasharray="2 1"/><path d="M2 4h9v9H2z" fill="#5aa76a" stroke="none"/><path d="M8 6v8l2-2h4z" fill="#fff" stroke="#222"/></svg></div>
          <div class="rb-row"><svg class="ic" width="14" height="17" viewBox="0 0 14 17"><rect class="fw" x="1" y="0" width="12" height="17"/><rect x="3" y="3" width="8" height="4" fill="#3b4453" stroke="none"/><path d="M3 11h4" stroke="#3b4453"/></svg></div>
        </div>
      </div>
      <div class="rb-foot">公用程式<span class="dn dn-lg"></span></div>
    </div>
    <!-- 剪貼簿 -->
    <div class="rb-panel" id="p-clip">
      <div class="rb-body">
        <div class="big w50"><svg class="ic" width="28" height="36" viewBox="0 0 28 36"><path d="M0 7h21v28H0z" fill="#c9a66f" stroke="none"/><path class="fw" d="M6 4h9v4H6zM9 1h3v4H9z"/><path d="M8 10h13l6 6v19H8z" fill="#dcdedf" stroke="#3b4453"/><path d="M21 10v6h6" stroke="#3b4453"/></svg><span>貼上</span><span class="dn"></span></div>
        <div class="rb-col ml3">
          <div class="rb-row"><svg class="ic" width="16" height="18" viewBox="0 0 16 18"><rect class="fw" x="0" y="0" width="12" height="16"/><path d="M2 3h6M2 6h4M2 9h3" stroke="#3b4453"/><path d="M6 3l7 9M13 3L6 12" stroke="#3b4453" stroke-width="1.600"/><circle cx="7" cy="14" r="2"/><circle cx="13" cy="14" r="2"/></svg></div>
          <div class="rb-row"><svg class="ic" width="14" height="18" viewBox="0 0 14 18"><path d="M0 0h8l2 2v11H0z" fill="none" stroke="#d8dadc"/><path class="fw" d="M4 4h6l4 4v10H4z"/></svg></div>
        </div>
      </div>
      <div class="rb-foot">剪貼簿</div>
    </div>
    <!-- 視圖 -->
    <div class="rb-panel" id="p-view">
      <div class="rb-body">
        <div class="big w58"><svg width="32" height="36" viewBox="0 0 32 36"><path d="M0 7h14v10h18v15H0z" fill="#dcdedf"/></svg><span>基準</span><span class="dn"></span></div>
      </div>
      <div class="rb-foot">視圖<span class="dn dn-lg"></span><svg width="7" height="7" viewBox="0 0 7 7"><path d="M1 1l5 5M6 2v4H2" fill="none" stroke="#c8ccd0"/></svg></div>
    </div>
  </section>

  <div class="doc-row">
    <span class="doc-tab">開始</span><span class="doc-tab is-on">×</span><span class="doc-plus">+</span>
  </div>
  <div class="doc-strip"></div>

  <main class="viewport">
    <svg class="cad-sheet" width="1910" height="798" viewBox="5 202 1910 798">
      <path d="M127 202H774V510H443V729H862V1000H127z" fill="#3b4858"/>
      <path d="M126.500 202V1000" stroke="#4b515a" stroke-width="2"/>
      <text x="0" y="0" transform="translate(114 685) rotate(-90)" font-family="Liberation Sans" font-size="72" textLength="114" lengthAdjust="spacingAndGlyphs" fill="#8e9092">814</text>
      <g fill="none" stroke="#8a8d90" stroke-width="1.300">
        <path d="M774.500 202V570M743.500 479.500L804 540M832 432.500H1254M862.500 463L923 402M893.500 372V504M1193.500 372V504M1163 463L1224 402"/>
      </g>
      <rect x="862" y="494" width="31.500" height="506" fill="#fff" stroke="#bcbcbc"/>
      <rect x="1193" y="494" width="722" height="31" fill="#fff"/>
      <g fill="none" stroke="#e4e4e4" stroke-width="1.400">
        <path d="M442.500 518.500H862M442.500 509.500H862M442.500 509.500V729.500H862M652.500 509.500V518.500"/>
        <path d="M893 494.500H910.500V822.500H926.500V520.500M893 537.500H906.500V520.500H1181.500V537.500H1194.500V525M1177.500 520.500V494.500H1193"/>
        <path d="M1183 538A264 264 0 0 1 926 822.500"/>
        <path d="M909.500 1000V858.500H926.500V1000"/>
        <path d="M1539.500 202V440M1615.500 202V440M1692.500 202V440M1768.500 202V440M1845.500 202V440M1539.500 275.500H1915M1529 440.500H1915M1529.500 440V494M1547.500 473.500V458.500H1915M1547.500 473.500H1915"/>
        <path d="M704.500 940V1000M812.500 940V1000M704 949.500H894" stroke="#b9bcbf"/>
      </g>
      <circle cx="1539.500" cy="275.500" r="7" fill="#fff"/>
      <text x="1006" y="423" font-family="Liberation Sans" font-size="74" textLength="72" lengthAdjust="spacingAndGlyphs" fill="#fff">90</text>
      <text x="1394" y="304" font-family="Roboto, Inter, sans-serif" font-weight="100" font-size="90" textLength="112" lengthAdjust="spacingAndGlyphs" fill="#c4c7ca">DN</text>
      <defs>
        <g id="seat" fill="none" stroke="#e4e4e4" stroke-width="1.400">
          <path d="M2 20C2 8 25 0 70 0S138 8 138 20"/>
          <path d="M0 22C2 10 30 6 70 6S138 10 140 22C140 34 130 42 115 40 90 37 50 37 25 40 10 42 0 34 0 22Z"/>
          <path d="M0 62C0 42 15 36 35 35 55 33 85 33 105 35 125 36 140 42 140 62V110C140 140 122 155 100 156 80 157 60 157 40 156 18 155 0 140 0 110Z"/>
        </g>
      </defs>
      <use href="#seat" x="1374" y="801"/>
      <use href="#seat" x="1579" y="801"/>
      <use href="#seat" x="1757" y="803"/>
      <g fill="none" stroke="#8a8d90">
        <path d="M1694 955L1725 986M1710.500 970V1000"/>
      </g>
      <path d="M1357 998C1420 985 1480 978 1529 975C1600 970 1700 970 1770 977C1830 983 1870 990 1912 996" fill="none" stroke="#8c9094" stroke-width="4"/>
      <path d="M1357 998C1420 985 1480 978 1529 975C1600 970 1700 970 1770 977C1830 983 1870 990 1912 996" fill="none" stroke="#fff" stroke-width="1.600"/>
      <path d="M1914.500 948V995M1866 996.500H1912" stroke="#e4e4e4" fill="none"/>
      <rect x="1910.500" y="993.500" width="4" height="5" fill="#222a33" stroke="#e4e4e4"/>
    </svg>

    <span class="vp-label">[-][上][2D 線架構]</span>

    <div class="compass">
      <span class="ring"></span>
      <div class="cube-face"><span>上</span></div>
      <span class="dir dir-n">北</span><span class="dir dir-s">南</span><span class="dir dir-w">西</span><span class="dir dir-e">東</span>
      <span class="wcs-tag">WCS<svg width="8" height="6" viewBox="0 0 8 6"><path d="M0 0h8L4 6z" fill="none" stroke="#6d7280"/></svg></span>
    </div>

    <svg class="nav-strip" viewBox="0 0 32 212" fill="none" stroke="#4a4f55" stroke-opacity=".75">
      <circle cx="26" cy="5" r="3"/>
      <path d="M6 30C6 22 10 19 16 19h10v11c0 7-5 11-10 11S6 37 6 30z"/><circle cx="16" cy="30" r="6"/>
      <path d="M14 50h4l-2 3z" fill="#4a4f55" stroke="none"/>
      <path d="M8 70l-3-6M11 68l-2-10M15 66l-1-11M18 66l2-10M21 69l3-8M8 70c3 10 6 11 9 11 5 0 8-4 8-10"/>
      <path d="M5 90l14 14M25 90L5 110"/><circle cx="22" cy="107" r="4"/>
      <path d="M14 120h4l-2 3z" fill="#4a4f55" stroke="none"/>
      <path d="M16 127v20M12 132l4-5 4 5M14 147h5v-15M6 143c6-5 16-5 21 0-4 4-10 5-15 4"/><path d="M6 143l4-2v5z" fill="#4a4f55"/>
      <path d="M14 158h4l-2 3z" fill="#4a4f55" stroke="none"/>
      <path d="M5 168h6v5H5zM13 168h6v5h-6zM21 168h6v5h-6zM5 178h16v14H5z"/><path d="M10 181l6 4-6 4z" fill="#4a4f55"/>
      <circle cx="26" cy="206" r="3"/>
    </svg>

    <div class="cmd-wrap">
      <div class="cmd-hist">輸入選項 [距離(D)/半徑(R)/角度(A)/面積(AR)/體積(V)/快速(Q)/模式(M)/結束(X)] &lt;距離&gt;: _quick</div>
      <div class="cmd-hist">移動游標或 [距離(D)/半徑(R)/角度(A)/面積(AR)/體積(V)/快速(Q)/模式(M)/結束(X)] &lt;結束&gt;: *取消*</div>
      <div class="cmd-bar">
        <div class="cmd-hand">
          <svg width="5" height="20" viewBox="0 0 5 20"><path d="M1 0v20M4 0v20" stroke="#b4b7bb" stroke-width="2" stroke-dasharray="2 1"/></svg>
          <svg width="10" height="10" viewBox="0 0 10 10"><path d="M1 1l8 8M9 1L1 9" stroke="#d0d2d5" stroke-width="2"/></svg>
          <svg class="ml7" width="14" height="16" viewBox="0 0 14 16"><path d="M1 15l8-9M10 5c0-3 2-4 4-4l-2 2 1 2c-1 2-3 2-4 1z" stroke="#e6e7e9" stroke-width="2" fill="#e6e7e9"/></svg>
        </div>
        <div class="cmd-input">
          <svg width="15" height="13" viewBox="0 0 15 13"><rect x="0.500" y="0.500" width="14" height="12" fill="#d8d9da" stroke="#54585e"/><path d="M1 3h13" stroke="#54585e" stroke-width="2"/><path d="M3 6l2 2-2 2M6 10h3" stroke="#54585e" fill="none"/></svg>
          <span class="dn me-1"></span>
          <span>鍵入指令</span>
          <span class="dn-up"></span>
        </div>
      </div>
    </div>
  </main>

  <footer class="foot-row">
    <div class="lt-tabs">
      <span class="lt-tab is-on">模型</span><span class="lt-tab">封面</span><span class="lt-tab">圖面索引表</span><span class="lt-tab">A101. 平面配置圖</span><span class="lt-tab">A102. 平面配置圖</span><span class="lt-tab">A103. 平面配置圖</span><span class="lt-tab">A104. 點雲圖</span><span class="lt-tab">A105. 點雲圖</span><span class="lt-tab">A106. 點雲圖</span><span class="lt-tab">符號索引</span><span class="lt-tab">材質表</span><span class="lt-tab lt-plus">+</span>
    </div>
    <div class="st-bar">
      <div class="st-grp" id="st-model"><span class="st-txt">模型</span></div>
      <div class="st-grp">
        <span class="st-btn on"><svg width="17" height="17" viewBox="0 0 17 17"><path d="M5 0v17M9 0v17M13 0v17M0 4h17M0 8.500h17M0 13h17" stroke="#fff"/></svg></span>
        <span class="st-btn"><svg width="14" height="14" viewBox="0 0 14 14"><path d="M1 0v14M7 0v14M13 0v14" stroke="#d8dadc" stroke-width="2" stroke-dasharray="2 4"/></svg></span>
        <span class="st-car"><span class="dn dn-lg"></span></span>
      </div>
      <div class="st-grp">
        <span class="st-btn on"><svg width="17" height="18" viewBox="0 0 17 18"><path d="M2 0v17h15M2 10h7v7" fill="none" stroke="#fff"/></svg></span>
        <span class="st-btn"><svg width="17" height="17" viewBox="0 0 17 17"><circle cx="7" cy="10" r="6" fill="none" stroke="#d8dadc"/><path d="M7 10l6-8M7 10h9" stroke="#d8dadc" fill="none"/></svg></span>
        <span class="st-car"><span class="dn dn-lg"></span></span>
        <span class="st-btn"><svg width="16" height="20" viewBox="0 0 16 20"><path d="M1 1l14 17" stroke="#d9534f"/><path d="M7 0v20" stroke="#5cb85c"/><circle cx="7" cy="10" r="2" fill="#d8dadc"/></svg></span>
        <span class="st-car"><span class="dn dn-lg"></span></span>
      </div>
      <div class="st-grp">
        <span class="st-btn on"><svg width="16" height="14" viewBox="0 0 16 14"><path d="M0 13h15M1 13L13 1" stroke="#fff" fill="none"/></svg></span>
        <span class="st-btn on"><svg width="17" height="18" viewBox="0 0 17 18"><path d="M3 3h13v14H3z" fill="none" stroke="#fff" stroke-width="1.300"/><rect x="0.500" y="0.500" width="4" height="4" fill="#5b90c2" stroke="#fff"/></svg></span>
        <span class="st-car"><span class="dn dn-lg"></span></span>
      </div>
      <div class="st-grp" id="st-scale">
        <span class="st-btn on"><svg width="19" height="20" viewBox="0 0 19 20"><path d="M8 1L1 19l7-5 7 5z" fill="#fff"/><circle cx="15" cy="5" r="3" fill="none" stroke="#fff"/></svg></span>
        <span class="st-btn"><svg width="19" height="20" viewBox="0 0 19 20"><path d="M8 3L1 19l7-5 7 5z" fill="#d8dadc"/><path d="M15 1l1 3 3 1-3 1-1 3-1-3-3-1 3-1z" fill="#d8dadc"/></svg></span>
        <span class="st-btn"><svg width="16" height="20" viewBox="0 0 16 20"><path d="M8 2L1 19l7-5 7 5z" fill="#d8dadc"/></svg></span>
        <span class="st-txt">1:20</span>
        <span class="dn dn-lg ms-1"></span>
      </div>
      <div class="st-grp">
        <span class="st-btn"><svg width="17" height="17" viewBox="0 0 17 17"><circle cx="8.500" cy="8.500" r="5" fill="none" stroke="#d8dadc" stroke-width="3"/><path d="M8.500 0v17M0 8.500h17M2.500 2.500l12 12M14.500 2.500l-12 12" stroke="#d8dadc" stroke-width="2.500" stroke-dasharray="3 11 3"/></svg></span>
        <span class="st-car"><span class="dn dn-lg"></span></span>
      </div>
      <div class="st-grp"><span class="st-btn"><svg width="17" height="17" viewBox="0 0 17 17"><path d="M8.500 0v17M0 8.500h17" stroke="#e6e7e9" stroke-width="1.600"/></svg></span></div>
      <div class="st-grp"><span class="st-btn"><svg width="18" height="18" viewBox="0 0 18 18"><rect x="1" y="1" width="7" height="7" fill="none" stroke="#d8dadc"/><circle cx="14" cy="8" r="3.500" fill="none" stroke="#d8dadc"/><path d="M6 11l3 6H3z" fill="none" stroke="#d8dadc"/></svg></span></div>
      <div class="st-grp"><span class="st-btn"><svg width="19" height="19" viewBox="0 0 19 19"><path d="M3 1h10l3 3v8H3z" fill="#3f6aa8"/><rect x="2" y="9" width="7" height="7" fill="#e9b93f"/><path d="M9 13l3 4 6-7" fill="none" stroke="#5fb85f" stroke-width="2.200"/><path d="M6 0v8M2 4h8" stroke="#fff"/></svg></span></div>
      <div class="st-grp" id="st-menu">
        <svg width="16" height="14" viewBox="0 0 16 14"><path d="M.5.500h15v13H.5zM4 10l3-3M4 10h3M4 10V7M12 4L9 7M12 4H9M12 4v3" fill="none" stroke="#d8dadc"/></svg>
        <svg class="ml8" width="16" height="14" viewBox="0 0 16 14"><path d="M0 1.500h16M0 7h16M0 12.500h16" stroke="#e6e7e9" stroke-width="2.200"/></svg>
      </div>
    </div>
  </footer>

  <!-- 紅色虛線框 -->
  <svg class="red-dash" width="1915" height="200" viewBox="5 1 1915 200" fill="#f00">
    <path d="M1253 58h12v11h-12zM1273 58h9v11h-9zM1292 58h9v11h-9zM1310 58h10v11h-10zM1328 58h12v11h-12z"/>
    <path d="M1253 78h12v10h-12zM1253 98h12v10h-12zM1253 118h12v9h-12zM1253 137h12v10h-12zM1253 156h12v9h-12z"/>
    <path d="M1328 78h12v10h-12zM1328 98h12v10h-12zM1328 118h12v9h-12zM1328 137h12v10h-12zM1328 156h12v9h-12z"/>
    <path d="M1253 175h12v11h-12zM1273 175h9v11h-9zM1292 175h9v11h-9zM1310 175h10v11h-10zM1328 175h12v11h-12z"/>
  </svg>
</div>
<script src="https://cdn.jsdelivr.net/npm/bootstrap@5.3.0/dist/js/bootstrap.bundle.min.js"></script>
</body>
</html>
